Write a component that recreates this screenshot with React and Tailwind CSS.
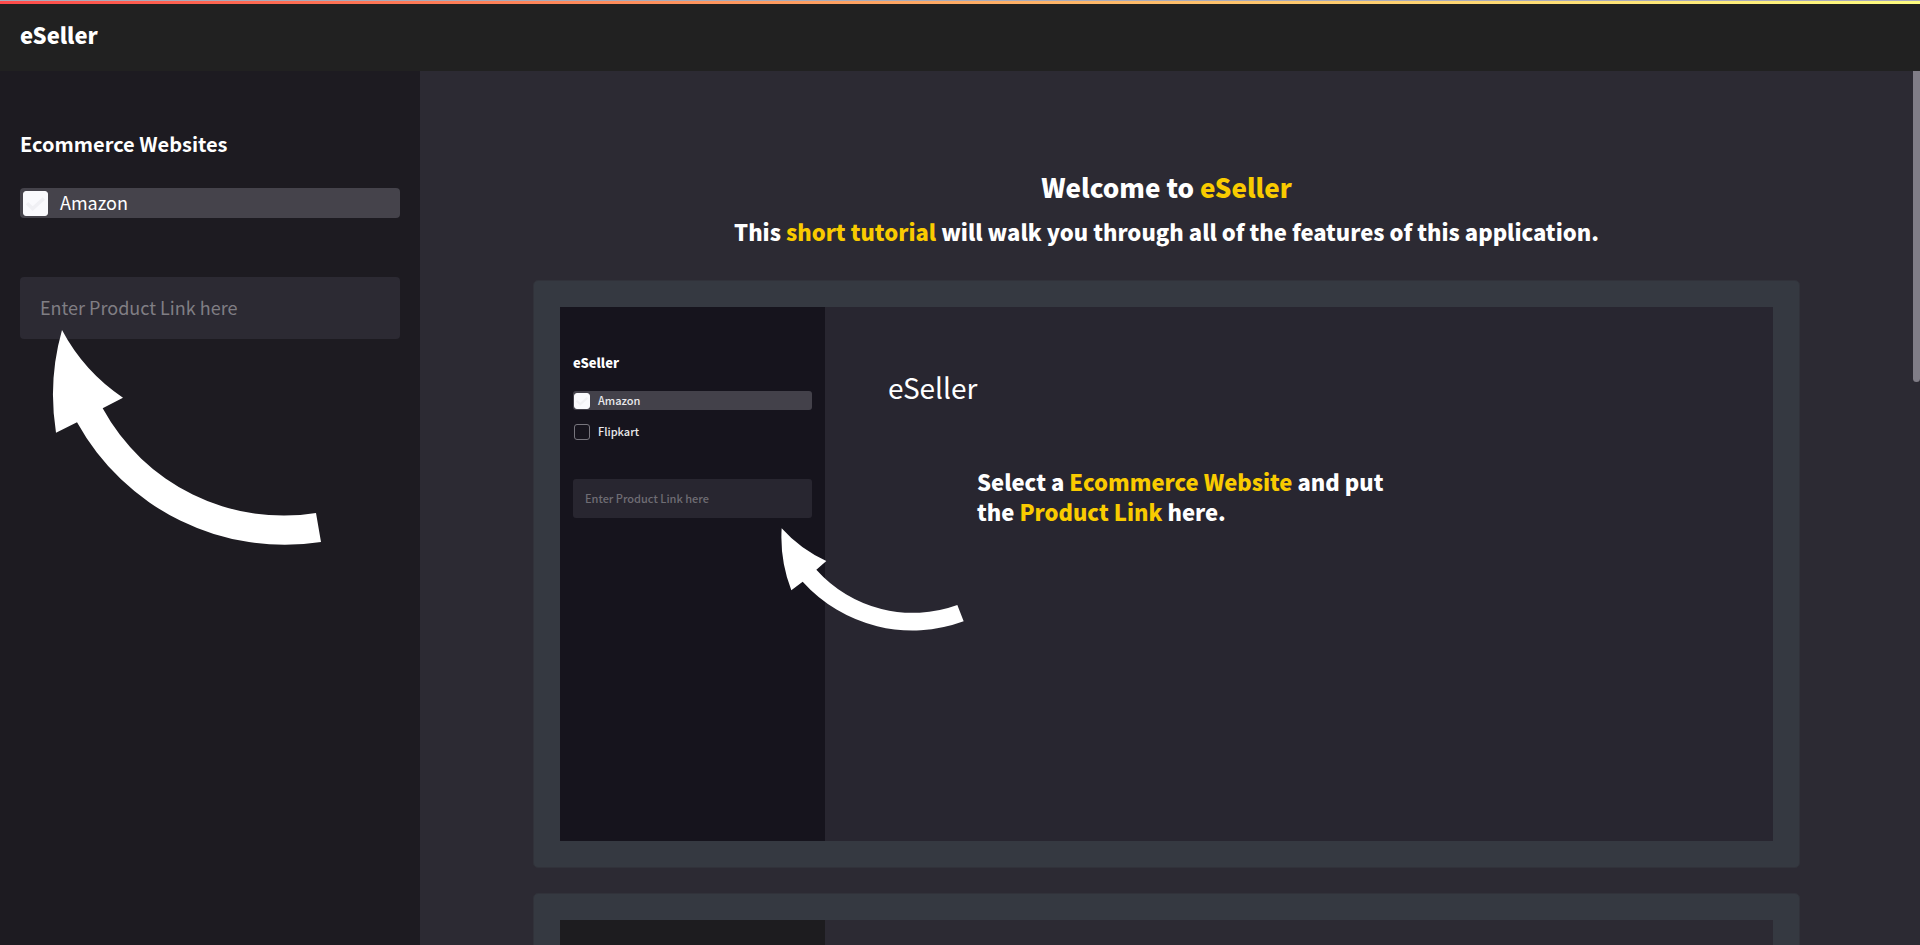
function Check({ id, checked, className, mark }) {
  return (
    <span className={`relative grid shrink-0 place-items-center ${className}`}>
      <input
        id={id}
        type="checkbox"
        defaultChecked={checked}
        className="h-full w-full appearance-none rounded-[3px] border border-[#77757d] checked:border-[#fafafd] checked:bg-[#fafafd]"
      />
      <svg
        viewBox="0 0 25 25"
        className={`pointer-events-none absolute inset-0 h-full w-full ${checked ? "" : "hidden"}`}
        fill="none"
        stroke={mark}
        strokeWidth="3.4"
      >
        <path d="M4 12.2 9.7 17.6 20.8 7.6" />
      </svg>
    </span>
  );
}

function Mark({ children }) {
  return <span className="text-[#f9cb00]">{children}</span>;
}

function TutorialCard({ children }) {
  return (
    <section className="rounded-[5px] border border-[#31323a] bg-[#353941] p-[26px]">
      {children}
    </section>
  );
}

export default function App() {
  return (
    <div className="flex h-screen flex-col overflow-hidden bg-[#2c2a33] font-['Noto_Sans_CJK_SC',sans-serif] text-white">
      <div className="h-px shrink-0 bg-[#a9abba]" />
      <div className="h-[3px] shrink-0 bg-linear-to-r from-[#ff4b4b] to-[#fffd80]" />
      <header className="h-[67px] shrink-0 bg-[#212121] px-5 pt-[14px]">
        <h1 className="text-[22px] leading-8 font-black">eSeller</h1>
      </header>

      <div className="flex min-h-0 flex-1">
        <aside className="relative w-[420px] shrink-0 bg-[#1d1b21] px-5 pt-[57px]">
          <h2 className="text-[20px] leading-8 font-bold">Ecommerce Websites</h2>
          <label
            htmlFor="site-amazon"
            className="mt-7 flex h-[30px] items-center gap-3 rounded-[4px] bg-[#45434b] px-[3px] text-[18px] leading-7"
          >
            <Check id="site-amazon" checked className="size-[25px]" mark="#f0f0f4" />
            <span className="pb-[2px]">Amazon</span>
          </label>
          <input
            type="text"
            aria-label="Product link"
            placeholder="Enter Product Link here"
            className="mt-[59px] h-[62px] w-full rounded-[4px] bg-[#2c2a33] px-5 pb-[2px] text-[18px] leading-[30px] outline-none placeholder:text-[#807e84]"
          />
          <svg
            viewBox="156 60 810 648"
            className="pointer-events-none absolute top-[259px] left-[52px] h-[216px] w-[270px]"
            fill="#fff"
            aria-hidden="true"
          >
            <path d="M186 60A560 560 0 0 0 369 263L308 295A618 618 0 0 0 948 609L963 696A712 712 0 0 1 231 337L168 368A715 715 0 0 1 186 60Z" />
          </svg>
        </aside>

        <main className="min-w-0 flex-1 overflow-hidden px-[113px] pt-[98px]">
          <div className="text-center font-black">
            <h2 className="text-[26px] leading-9">
              Welcome to <Mark>eSeller</Mark>
            </h2>
            <p className="mt-2 text-[22px] leading-9">
              This <Mark>short tutorial</Mark> will walk you through all of the features of this
              application.
            </p>
          </div>

          <div className="mt-[31px] flex flex-col gap-[25px]">
            <TutorialCard>
              <div className="relative flex aspect-[1213/534] bg-[#282630]">
                <div className="w-[265px] shrink-0 bg-[#16141d] px-[13px] pt-[46px]">
                  <h3 className="text-[13px] leading-5 font-black">eSeller</h3>
                  <label
                    htmlFor="demo-amazon"
                    className="mt-[18px] flex h-[19px] items-center gap-2 rounded-[3px] bg-[#43414a] px-px text-[11px] leading-[19px] font-medium text-[#e9e9ec]"
                  >
                    <Check id="demo-amazon" checked className="size-4" mark="#f1f1f4" />
                    Amazon
                  </label>
                  <label
                    htmlFor="demo-flipkart"
                    className="mt-3 flex h-[19px] items-center gap-2 px-px text-[11px] leading-[19px] font-medium text-[#e9e9ec]"
                  >
                    <Check id="demo-flipkart" className="size-4" mark="#f1f1f4" />
                    Flipkart
                  </label>
                  <input
                    type="text"
                    aria-label="Demo product link"
                    placeholder="Enter Product Link here"
                    className="mt-[38px] h-[39px] w-full rounded-[3px] bg-[#282630] px-3 pb-[2px] text-[11px] leading-5 font-medium outline-none placeholder:text-[#6f6d74]"
                  />
                </div>
                <div className="min-w-0 flex-1 pt-[60px] pl-[63px]">
                  <p className="text-[28px] leading-10">eSeller</p>
                  <p className="mt-[59px] ml-[89px] max-w-[430px] text-[22px] leading-[30px] font-black">
                    Select a <Mark>Ecommerce Website</Mark> and put the <Mark>Product Link</Mark>{" "}
                    here.
                  </p>
                </div>
                <svg
                  viewBox="783 774 549 309"
                  className="pointer-events-none absolute top-[221px] left-[221px] h-[103px] w-[183px]"
                  fill="#fff"
                  aria-hidden="true"
                >
                  <path d="M785 775A400 400 0 0 0 919 873L889 899A389 389 0 0 0 1312 1005L1331 1054A444 444 0 0 1 848 935L814 961A440 440 0 0 1 785 775Z" />
                </svg>
              </div>
            </TutorialCard>
            <TutorialCard>
              <div className="flex aspect-[1213/534] bg-[#2c2a33]">
                <div className="w-[265px] shrink-0 bg-[#1d1c1f]" />
              </div>
            </TutorialCard>
          </div>
        </main>

        <div className="w-[7px] shrink-0 bg-[#2c2a33]" aria-hidden="true">
          <div className="h-[311px] rounded-b-full bg-[#807d87]" />
        </div>
      </div>
    </div>
  );
}
